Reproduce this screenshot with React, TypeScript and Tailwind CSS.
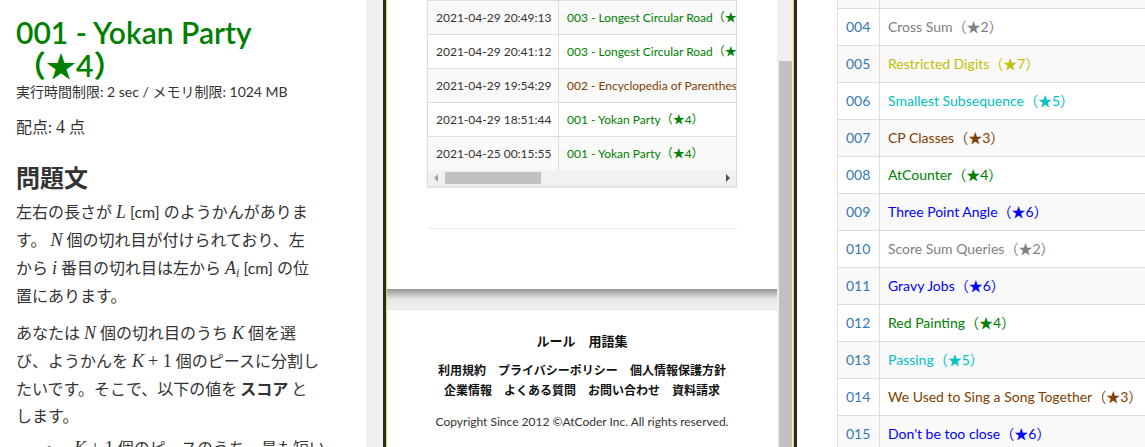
import React from "react";

type Problem = { no: string; title: string; color: string };
type Submission = { time: string; task: string; color: string };

const problems: Problem[] = [
  { no: "004", title: "Cross Sum（★2）", color: "text-[#808080]" },
  { no: "005", title: "Restricted Digits（★7）", color: "text-[#c0c000]" },
  { no: "006", title: "Smallest Subsequence（★5）", color: "text-[#00c0c0]" },
  { no: "007", title: "CP Classes（★3）", color: "text-[#804000]" },
  { no: "008", title: "AtCounter（★4）", color: "text-[#008000]" },
  { no: "009", title: "Three Point Angle（★6）", color: "text-[#0000ff]" },
  { no: "010", title: "Score Sum Queries（★2）", color: "text-[#808080]" },
  { no: "011", title: "Gravy Jobs（★6）", color: "text-[#0000ff]" },
  { no: "012", title: "Red Painting（★4）", color: "text-[#008000]" },
  { no: "013", title: "Passing（★5）", color: "text-[#00c0c0]" },
  { no: "014", title: "We Used to Sing a Song Together（★3）", color: "text-[#804000]" },
  { no: "015", title: "Don't be too close（★6）", color: "text-[#0000ff]" },
];

const submissions: Submission[] = [
  { time: "2021-04-29 20:49:13", task: "003 - Longest Circular Road（★4）", color: "text-[#008000]" },
  { time: "2021-04-29 20:41:12", task: "003 - Longest Circular Road（★4）", color: "text-[#008000]" },
  { time: "2021-04-29 19:54:29", task: "002 - Encyclopedia of Parentheses（★3）", color: "text-[#804000]" },
  { time: "2021-04-29 18:51:44", task: "001 - Yokan Party（★4）", color: "text-[#008000]" },
  { time: "2021-04-25 00:15:55", task: "001 - Yokan Party（★4）", color: "text-[#008000]" },
];

// inline math, rendered like KaTeX italics
const M: React.FC<{ children: React.ReactNode }> = ({ children }) => (
  <span className="font-['Liberation_Serif',serif] italic text-[18px] mx-[4px]">{children}</span>
);

const ProblemStatement: React.FC = () => {
  return (
    <div className="w-[366px] shrink-0 bg-white pl-4 text-[#333] whitespace-nowrap overflow-hidden">
      <h2 className="mt-[16px] text-[30px] leading-[33px] font-semibold text-[#008000]">
        001 - Yokan Party
        <br />
        （★4）
      </h2>
      <p className="text-[14px] leading-[20px]">実行時間制限: 2 sec / メモリ制限: 1024 MB</p>
      <p className="mt-[11px] text-[16px] leading-[27px]">
        配点:<span className="font-['Liberation_Serif',serif] text-[18px] mx-[4px]">4</span>点
      </p>
      <h3 className="mt-[24px] text-[24px] leading-[26px] font-bold">問題文</h3>
      <p className="mt-[7px] text-[16px] leading-[27px]">
        左右の長さが<M>L</M>[cm] のようかんがありま
        <br />
        す。<M>N</M>個の切れ目が付けられており、左
        <br />
        から<M>i</M>番目の切れ目は左から
        <M>
          A<sub className="text-[12px]">i</sub>
        </M>
        [cm] の位
        <br />
        置にあります。
      </p>
      <p className="mt-[10px] text-[16px] leading-[27px]">
        あなたは<M>N</M>個の切れ目のうち<M>K</M>個を選
        <br />
        び、ようかんを<M>K</M>
        <span className="font-['Liberation_Serif',serif] text-[18px] mr-[4px]">+ 1</span>
        個のピースに分割し
        <br />
        たいです。そこで、以下の値を<b className="mx-[3px]">スコア</b>と
        <br />
        します。
      </p>
      <ul className="mt-[5px] text-[16px] leading-[27px] pl-[30px]">
        <li className="flex items-center gap-[18px]">
          <span className="text-[10px]">●</span>
          <span>
            <M>K</M>
            <span className="font-['Liberation_Serif',serif] text-[18px] mr-[4px]">+ 1</span>
            個のピースのうち、最も短い
          </span>
        </li>
      </ul>
    </div>
  );
};

const SubmissionsCard: React.FC = () => {
  return (
    <div className="w-[390px] shrink-0 flex flex-col bg-[#f2f2f2]">
      <div className="h-[289px] bg-white px-[40px]">
        <div className="w-[310px] border-x border-b border-[#ddd] shadow-[0_1px_1px_rgba(0,0,0,0.08)] overflow-hidden">
          {submissions.map((s, i) => (
            <div
              key={i}
              className={`flex h-[34px] border-t border-[#ddd] text-[12px] ${i % 2 === 0 ? "bg-[#f9f9f9]" : "bg-white"}`}
            >
              <div className="w-[131px] shrink-0 border-r border-[#ddd] pl-2 pt-px flex items-center text-[#333]">
                {s.time}
              </div>
              <div className={`pl-2 pt-px flex items-center whitespace-nowrap ${s.color}`}>{s.task}</div>
            </div>
          ))}
          <div className="h-[16px] bg-[#f1f1f1] flex items-center">
            <span className="ml-[6px] w-0 h-0 border-y-[4px] border-y-transparent border-r-[4px] border-r-[#a3a3a3]" />
            <span className="ml-[7px] w-[96px] h-[12px] bg-[#c1c1c1]" />
            <span className="ml-auto mr-[6px] w-0 h-0 border-y-[4px] border-y-transparent border-l-[4px] border-l-[#505050]" />
          </div>
        </div>
        <div className="mt-[41px] w-[310px] h-px bg-[#eee]" />
      </div>
      <div className="h-[20px] bg-linear-to-b from-[#969696] via-[#e6e6e6] to-[#f2f2f2]" />
      <div className="h-px bg-[#e6e6e6]" />
      <footer className="flex-1 bg-white flex flex-col items-center text-[#111]">
        <div className="mt-[21px] text-[13px] leading-[20px] font-bold flex gap-[13px]">
          <span>ルール</span>
          <span>用語集</span>
        </div>
        <div className="mt-[10px] text-[12px] leading-[20px] font-bold flex gap-[12px]">
          <span>利用規約</span>
          <span>プライバシーポリシー</span>
          <span>個人情報保護方針</span>
        </div>
        <div className="text-[12px] leading-[20px] font-bold flex gap-[12px]">
          <span>企業情報</span>
          <span>よくある質問</span>
          <span>お問い合わせ</span>
          <span>資料請求</span>
        </div>
        <p className="mt-[13px] text-[12px] leading-[16px] text-[#333]">
          Copyright Since 2012 ©AtCoder Inc. All rights reserved.
        </p>
      </footer>
    </div>
  );
};

const ProblemList: React.FC = () => {
  return (
    <div className="flex-1 bg-white pl-[40px] overflow-hidden">
      <div className="border-l border-[#ddd] text-[14px] whitespace-nowrap">
        <div className="flex h-[8px] bg-[#f9f9f9]">
          <div className="w-[42px] shrink-0 border-r border-[#ddd]" />
        </div>
        {problems.map((p, i) => (
          <div
            key={p.no}
            className={`flex h-[37px] border-t border-[#ddd] pb-[2px] ${i % 2 === 0 ? "bg-white" : "bg-[#f9f9f9]"}`}
          >
            <div className="w-[42px] shrink-0 border-r border-[#ddd] -mb-[2px] pl-2 pb-[2px] flex items-center text-[#337ab7]">
              {p.no}
            </div>
            <div className={`pl-2 flex items-center ${p.color}`}>{p.title}</div>
          </div>
        ))}
      </div>
    </div>
  );
};

const App: React.FC = () => {
  return (
    <div className="flex w-[1145px] h-[447px] overflow-hidden font-['Lato','Noto_Sans_CJK_JP',sans-serif]">
      <ProblemStatement />
      <div className="w-[17px] shrink-0 bg-[#f0f0f0]" />
      <div className="w-[3px] shrink-0 bg-[#2b2b26]" />
      <div className="w-px shrink-0 bg-[#e8d64c]" />
      <SubmissionsCard />
      {/* page scrollbar */}
      <div className="w-[16px] shrink-0 bg-[#f0f0f0] flex flex-col">
        <div className="mt-[61px] ml-[2px] w-[13px] flex-1 bg-[#c1c1c1]" />
      </div>
      <div className="w-px shrink-0 bg-[#e8d64c]" />
      <div className="w-[3px] shrink-0 bg-[#2b2b26]" />
      <ProblemList />
    </div>
  );
};

export default App;
